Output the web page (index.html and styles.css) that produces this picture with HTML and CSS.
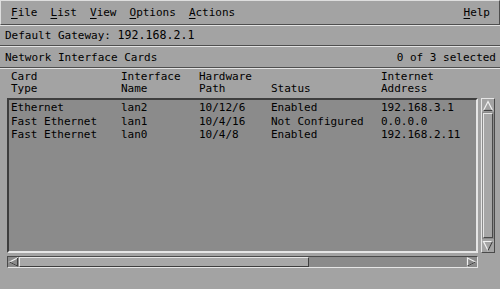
FILE: index.html
```
<!DOCTYPE html>
<html lang="en">

<head>
    <meta charset="UTF-8">
    <title>Network Interface Cards</title>
    <link rel="stylesheet" href="styles.css">
</head>

<body>
    <div class="menubar">
        <span class="menu"><u>F</u>ile</span>
        <span class="menu"><u>L</u>ist</span>
        <span class="menu"><u>V</u>iew</span>
        <span class="menu"><u>O</u>ptions</span>
        <span class="menu"><u>A</u>ctions</span>
        <span class="menu help"><u>H</u>elp</span>
    </div>

    <div class="gateway">Default Gateway: <span class="big">192.168.2.1</span></div>

    <div class="cardsbar">
        <span>Network Interface Cards</span>
        <span>0 of 3 selected</span>
    </div>

    <div class="panel">
        <div class="cols heads">
            <span>Card<br>Type</span>
            <span>Interface<br>Name</span>
            <span>Hardware<br>Path</span>
            <span><br>Status</span>
            <span>Internet<br>Address</span>
        </div>

        <div class="listarea">
            <div class="listbox">
                <div class="cols row">
                    <span>Ethernet</span><span>lan2</span><span>10/12/6</span><span>Enabled</span><span>192.168.3.1</span>
                </div>
                <div class="cols row">
                    <span>Fast Ethernet</span><span>lan1</span><span>10/4/16</span><span>Not Configured</span><span>0.0.0.0</span>
                </div>
                <div class="cols row">
                    <span>Fast Ethernet</span><span>lan0</span><span>10/4/8</span><span>Enabled</span><span>192.168.2.11</span>
                </div>
            </div>

            <div class="vscroll">
                <div class="arrow">
                    <svg width="12" height="12" viewBox="0 0 12 12">
                        <polygon points="6,1.5 10.5,10.5 1.5,10.5" fill="none" stroke="#f0f0f0" stroke-width="1.2"/>
                        <polyline points="10.5,10.5 1.5,10.5" fill="none" stroke="#404040" stroke-width="1.2"/>
                    </svg>
                </div>
                <div class="vthumb"></div>
                <div class="arrow">
                    <svg width="12" height="12" viewBox="0 0 12 12">
                        <polygon points="1.5,1.5 10.5,1.5 6,10.5" fill="none" stroke="#f0f0f0" stroke-width="1.2"/>
                        <polyline points="10.5,1.5 6,10.5" fill="none" stroke="#404040" stroke-width="1.2"/>
                    </svg>
                </div>
            </div>
        </div>

        <div class="hscroll">
            <div class="arrow">
                <svg width="11" height="10" viewBox="0 0 11 10">
                    <polygon points="1.5,5 9.5,1 9.5,9" fill="none" stroke="#f0f0f0" stroke-width="1.2"/>
                    <polyline points="9.5,1 9.5,9 1.5,5" fill="none" stroke="#404040" stroke-width="1.2"/>
                </svg>
            </div>
            <div class="hthumb"></div>
            <div class="trough"></div>
            <div class="arrow">
                <svg width="11" height="10" viewBox="0 0 11 10">
                    <polygon points="1.5,1 9.5,5 1.5,9" fill="none" stroke="#f0f0f0" stroke-width="1.2"/>
                    <polyline points="9.5,5 1.5,9" fill="none" stroke="#404040" stroke-width="1.2"/>
                </svg>
            </div>
        </div>
    </div>
</body>

</html>
```

FILE: styles.css
```
body {
    margin: 0;
    width: 500px;
    height: 289px;
    overflow: hidden;
    background: #a3a3a3;
    color: #000;
    font-family: "DejaVu Sans Mono", "Liberation Mono", monospace;
    font-size: 11px;
}

/* menu bar */
.menubar {
    box-sizing: border-box;
    height: 25px;
    display: flex;
    align-items: center;
    gap: 13px;
    padding: 0 9px 0 10px;
    border-top: 1px solid #dedede;
    border-left: 1px solid #dedede;
    border-bottom: 1px solid #4e4e4e;
    border-right: 1px solid #4e4e4e;
}

.menu u {
    text-decoration-thickness: 1px;
    text-underline-offset: 2px;
}

.help {
    margin-left: auto;
}

/* etched rows */
.gateway,
.cardsbar {
    box-sizing: border-box;
    border-top: 1px solid #e2e2e2;
    border-bottom: 1px solid #4e4e4e;
    padding: 0 5px;
}

.gateway {
    height: 21px;
    line-height: 19px;
}

.gateway .big {
    font-size: 11.6px;
}

.cardsbar {
    height: 22px;
    display: flex;
    align-items: center;
    justify-content: space-between;
    padding-right: 4px;
}

.panel {
    border-top: 1px solid #e2e2e2;
    padding: 2px 5px 0 7px;
}

.cols {
    display: grid;
    grid-template-columns: 110px 78px 72px 110px 1fr;
}

.heads {
    padding-left: 4px;
    line-height: 12px;
}

.listarea {
    display: flex;
    gap: 3px;
    margin-top: 3px;
}

.listbox {
    box-sizing: border-box;
    width: 472px;
    height: 155px;
    background: #8b8b8b;
    border-top: 2px solid #3e3e3e;
    border-left: 2px solid #3e3e3e;
    border-bottom: 2px solid #e6e6e6;
    border-right: 2px solid #e6e6e6;
    padding: 1px 0 0 2px;
}

.row {
    line-height: 13.5px;
}

/* scroll bars */
.vscroll {
    box-sizing: border-box;
    width: 14px;
    height: 155px;
    display: flex;
    flex-direction: column;
    background: #8b8b8b;
    border-top: 1px solid #e6e6e6;
    border-left: 1px solid #e6e6e6;
    border-bottom: 1px solid #4a4a4a;
    border-right: 1px solid #4a4a4a;
}

.vscroll .arrow {
    height: 13px;
    display: flex;
    align-items: center;
    justify-content: center;
    background: #a3a3a3;
}

.vthumb {
    flex: 1;
    margin: 1px 1px;
    background: #a6a6a6;
    border-left: 1px solid #e6e6e6;
    border-right: 1px solid #4a4a4a;
    border-top: 1px solid #e6e6e6;
    border-bottom: 1px solid #4a4a4a;
}

.hscroll {
    box-sizing: border-box;
    width: 471px;
    height: 12px;
    margin-top: 3px;
    display: flex;
    background: #8b8b8b;
    border-top: 1px solid #4a4a4a;
    border-left: 1px solid #4a4a4a;
    border-bottom: 1px solid #e6e6e6;
    border-right: 1px solid #e6e6e6;
}

.hscroll .arrow {
    width: 11px;
    display: flex;
    align-items: center;
    justify-content: center;
}

.hthumb {
    box-sizing: border-box;
    width: 290px;
    background: #a8a8a8;
    border-top: 1px solid #e6e6e6;
    border-left: 1px solid #e6e6e6;
    border-bottom: 1px solid #3e3e3e;
    border-right: 1px solid #3e3e3e;
}

.trough {
    flex: 1;
}
```
